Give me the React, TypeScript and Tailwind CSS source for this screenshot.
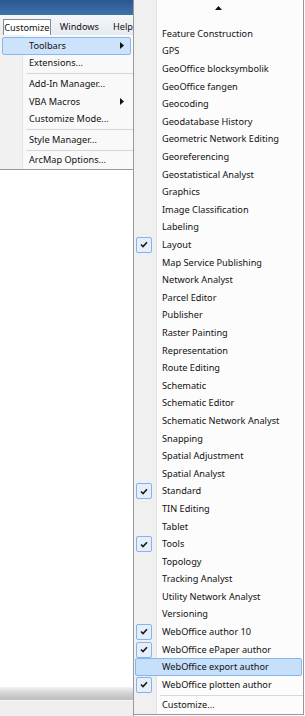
import React from "react";

const toolbars: { name: string; checked?: boolean; hover?: boolean }[] = [
  { name: "Feature Construction" },
  { name: "GPS" },
  { name: "GeoOffice blocksymbolik" },
  { name: "GeoOffice fangen" },
  { name: "Geocoding" },
  { name: "Geodatabase History" },
  { name: "Geometric Network Editing" },
  { name: "Georeferencing" },
  { name: "Geostatistical Analyst" },
  { name: "Graphics" },
  { name: "Image Classification" },
  { name: "Labeling" },
  { name: "Layout", checked: true },
  { name: "Map Service Publishing" },
  { name: "Network Analyst" },
  { name: "Parcel Editor" },
  { name: "Publisher" },
  { name: "Raster Painting" },
  { name: "Representation" },
  { name: "Route Editing" },
  { name: "Schematic" },
  { name: "Schematic Editor" },
  { name: "Schematic Network Analyst" },
  { name: "Snapping" },
  { name: "Spatial Adjustment" },
  { name: "Spatial Analyst" },
  { name: "Standard", checked: true },
  { name: "TIN Editing" },
  { name: "Tablet" },
  { name: "Tools", checked: true },
  { name: "Topology" },
  { name: "Tracking Analyst" },
  { name: "Utility Network Analyst" },
  { name: "Versioning" },
  { name: "WebOffice author 10", checked: true },
  { name: "WebOffice ePaper author", checked: true },
  { name: "WebOffice export author", hover: true },
  { name: "WebOffice plotten author", checked: true },
];

function Check() {
  return (
    <svg width="8" height="7" viewBox="0 0 8 7">
      <path d="M1 3.5 L3 5.5 L7 1.2" stroke="#1a1a1a" strokeWidth="1.6" fill="none" />
    </svg>
  );
}

function Arrow() {
  return (
    <svg width="4" height="7" viewBox="0 0 4 7">
      <path d="M0 0 L4 3.5 L0 7 Z" fill="#111" />
    </svg>
  );
}

function LeftItem({ label, sub, hover }: { label: string; sub?: boolean; hover?: boolean }) {
  return (
    <div
      className={`relative flex items-center h-[17.6px] mx-[2px] pl-[26px] pr-[6px] ${
        hover ? "bg-[#cce3fb] border border-[#84b8ee] rounded-[2px]" : "border border-transparent"
      }`}
    >
      <span className="flex-1">{label}</span>
      {sub && <Arrow />}
    </div>
  );
}

function LeftSep() {
  return (
    <div className="h-[3px] flex items-center pl-[26px]">
      <div className="h-px w-full bg-[#d7d7d7]" />
    </div>
  );
}

export default function App() {
  return (
    <div
      className="w-[305px] h-[716px] flex bg-white text-[9.2px] text-[#111] overflow-hidden"
      style={{ fontFamily: '"Segoe UI", "Noto Sans", sans-serif' }}
    >
      {/* left: ArcMap window behind */}
      <div className="w-[134px] flex flex-col border-r border-[#9a9a9a]">
        <div className="h-[15px] bg-gradient-to-b from-[#2a5890] to-[#3f72ab]" />
        <div className="h-[20px] bg-gradient-to-b from-[#f4f6f9] to-[#e6ebf1] flex items-end pl-[3px]">
          <div className="h-[16px] w-[56px] bg-white border border-b-0 border-[#8a8a8a] flex items-center justify-center">
            Customize
          </div>
          <div className="h-[16px] flex items-center pl-[9px]">Windows</div>
          <div className="h-[16px] flex items-center pl-[14px] whitespace-nowrap">Help</div>
        </div>
        <div className="relative h-[135px] bg-[#f9f9f9] border-b border-[#9a9a9a] pt-[2px]">
          <div className="absolute left-[22px] top-0 bottom-0 w-px bg-[#e2e3e3]" />
          <div className="absolute left-0 top-0 bottom-0 w-[22px] bg-[#f1f1f1]" />
          <div className="relative">
            <LeftItem label="Toolbars" sub hover />
            <LeftItem label="Extensions..." />
            <LeftSep />
            <LeftItem label="Add-In Manager..." />
            <LeftItem label="VBA Macros" sub />
            <LeftItem label="Customize Mode..." />
            <LeftSep />
            <LeftItem label="Style Manager..." />
            <LeftSep />
            <LeftItem label="ArcMap Options..." />
          </div>
        </div>
        <div className="flex-1 bg-white" />
        <div className="h-[13px] bg-gradient-to-b from-[#f3f3f3] via-[#d2d2d2] to-[#bdbdbd]" />
        <div className="h-[16px] bg-[#efefef] border-t border-[#f8f8f8]" />
      </div>

      {/* right: toolbars submenu */}
      <div className="relative w-[170px] h-[715px] bg-[#fcfcfc] border-r border-b border-[#979797]">
        <div className="absolute left-0 top-0 bottom-0 w-[22px] bg-[#f0f0f0]" />
        <div className="absolute left-[22px] top-0 bottom-0 w-px bg-[#e2e3e3]" />
        <div className="absolute left-[23px] top-0 bottom-0 w-px bg-white" />
        <div className="relative">
          <div className="h-[25px] flex justify-center pt-[6px]">
            <svg width="7" height="4" viewBox="0 0 7 4">
              <path d="M0 4 L3.5 0 L7 4 Z" fill="#111" />
            </svg>
          </div>
          {toolbars.map((t) => (
            <div key={t.name} className="relative h-[17.6px] flex items-center">
              {t.hover && (
                <div className="absolute left-[1px] right-[1px] top-0 bottom-0 bg-[#c6dffa] border border-[#85b6ee] rounded-[2px]" />
              )}
              <div className="relative w-[28px] h-full flex items-center pl-[2px]">
                {t.checked && (
                  <div className="w-[16px] h-[16px] border border-[#83b5ec] bg-[#e4effb] rounded-[2px] flex items-center justify-center">
                    <Check />
                  </div>
                )}
              </div>
              <span className="relative whitespace-nowrap">{t.name}</span>
            </div>
          ))}
          <div className="h-[3px] flex items-center pl-[26px]">
            <div className="h-px w-full bg-[#d7d7d7]" />
          </div>
          <div className="h-[17px] flex items-center pl-[28px]">Customize...</div>
        </div>
      </div>
    </div>
  );
}
